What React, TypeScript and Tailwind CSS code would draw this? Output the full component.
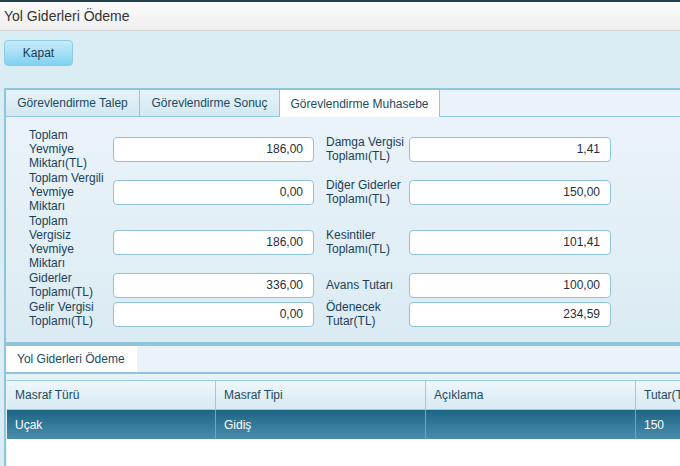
import React from 'react';

const rows: { left: string; leftValue: string; right: string; rightValue: string }[] = [
  { left: 'Toplam Yevmiye Miktarı(TL)', leftValue: '186,00', right: 'Damga Vergisi Toplamı(TL)', rightValue: '1,41' },
  { left: 'Toplam Vergili Yevmiye Miktarı', leftValue: '0,00', right: 'Diğer Giderler Toplamı(TL)', rightValue: '150,00' },
  { left: 'Toplam Vergisiz Yevmiye Miktarı', leftValue: '186,00', right: 'Kesintiler Toplamı(TL)', rightValue: '101,41' },
  { left: 'Giderler Toplamı(TL)', leftValue: '336,00', right: 'Avans Tutarı', rightValue: '100,00' },
  { left: 'Gelir Vergisi Toplamı(TL)', leftValue: '0,00', right: 'Ödenecek Tutar(TL)', rightValue: '234,59' },
];

const columns = [
  { title: 'Masraf Türü', width: 'w-[209px]' },
  { title: 'Masraf Tipi', width: 'w-[210px]' },
  { title: 'Açıklama', width: 'w-[210px]' },
  { title: 'Tutar(TL)', width: 'w-[120px]' },
];

const Field: React.FC<{ value: string }> = ({ value }) => (
  <div className="h-[25px] rounded-[4px] border border-[#8fc2d8] bg-white pr-[10px] flex items-center justify-end text-[#1f2f3c]">
    {value}
  </div>
);

const App: React.FC = () => {
  return (
    <div className="w-[680px] h-[466px] overflow-hidden bg-[#daecf4] font-['Liberation_Sans',Arial,sans-serif] text-[12px] text-[#1b3f57]">
      <div className="h-[2px] bg-[#23404f]" />
      <div className="h-[29px] border-b border-[#d3d3d3] bg-gradient-to-b from-[#fbfbfb] to-[#efefef] px-1 flex items-center text-[14px] text-[#333]">
        Yol Giderleri Ödeme
      </div>

      <div className="px-1 pt-[9px]">
        <button className="h-[26px] w-[69px] rounded-[4px] border border-[#8fcbe3] bg-gradient-to-b from-[#c8ecfa] to-[#7fd1f2] text-[12px] text-[#1a3a55]">
          Kapat
        </button>
      </div>

      <div className="ml-1 mt-[22px] w-[700px] border-t-2 border-l-2 border-b-2 border-[#8ec5da]">
        <div className="flex h-[27px] bg-[#eaf3f9] border-b border-[#8fc7de]">
          <div className="w-[134px] flex items-center justify-center border-r border-[#8fc7de] bg-gradient-to-b from-[#e6f3f9] to-[#d3e8f2] text-[#1d4a60]">
            Görevlendirme Talep
          </div>
          <div className="w-[140px] flex items-center justify-center border-r border-[#8fc7de] bg-gradient-to-b from-[#e6f3f9] to-[#d3e8f2] text-[#1d4a60]">
            Görevlendirme Sonuç
          </div>
          <div className="w-[160px] h-[27px] flex items-center justify-center border-r border-[#8fc7de] bg-white text-[#1d4a60]">
            Görevlendirme Muhasebe
          </div>
        </div>

        <div className="h-[225px] bg-gradient-to-b from-[#eaf3f9] to-[#dbebf3] pt-[11px] pl-[23px]">
          <div className="grid grid-cols-[84px_201px_12px_83px_202px] items-center gap-y-px leading-[14px]">
            {rows.map((r) => (
              <React.Fragment key={r.left}>
                <div className="pr-[2px]">{r.left}</div>
                <Field value={r.leftValue} />
                <div />
                <div className="pr-[1px]">{r.right}</div>
                <Field value={r.rightValue} />
              </React.Fragment>
            ))}
          </div>
        </div>
      </div>

      <div className="ml-1 w-[700px] h-[200px] border-t-2 border-l-2 border-[#8ec5da]">
        <div className="flex h-[28px] bg-[#eaf3f9] border-b-2 border-[#8ec5da]">
          <div className="w-[131px] pl-[11px] flex items-center bg-white text-[#1d4a60]">
            Yol Giderleri Ödeme
          </div>
        </div>
        <div className="bg-[#e7f2f8] pt-[6px] pl-px">
          <div className="flex h-[30px] border-t border-b border-[#9ccbe0] bg-gradient-to-b from-[#eef7fc] to-[#d8eaf3]">
            {columns.map((c, i) => (
              <div
                key={c.title}
                className={`${c.width} shrink-0 pl-2 flex items-center text-[#1d4a60] ${i < columns.length - 1 ? 'border-r border-[#9ccbe0]' : ''}`}
              >
                {c.title}
              </div>
            ))}
          </div>
          <div className="flex h-[29px] bg-gradient-to-b from-[#1b6586] to-[#4a8dab] text-white">
            {['Uçak', 'Gidiş', '', '150'].map((v, i) => (
              <div
                key={i}
                className={`${columns[i].width} shrink-0 pl-2 flex items-center ${i < 3 ? 'border-r border-[#6fa6bf]' : ''}`}
              >
                {v}
              </div>
            ))}
          </div>
          <div className="h-[40px] bg-white" />
        </div>
      </div>
    </div>
  );
};

export default App;
